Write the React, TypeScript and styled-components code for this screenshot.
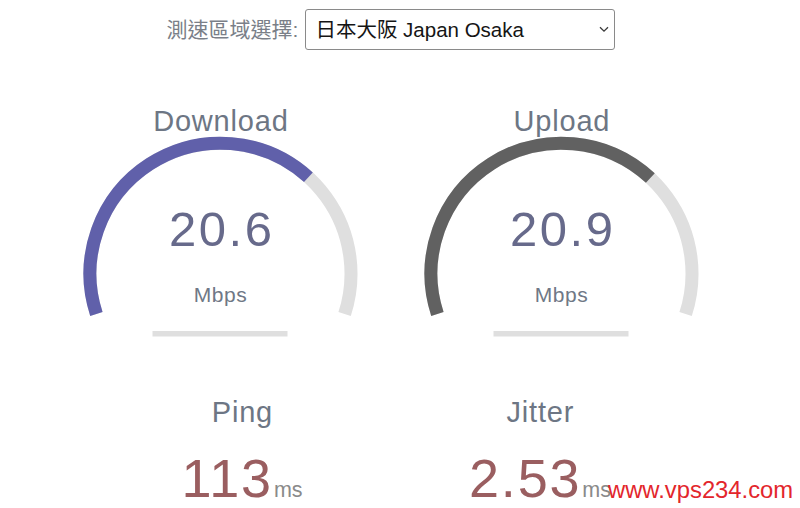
import React from "react";
import styled, { createGlobalStyle } from "styled-components";

const GlobalStyle = createGlobalStyle`
  html, body { margin: 0; padding: 0; background: #ffffff; overflow: hidden; }
  body { font-family: "Liberation Sans", "Noto Sans CJK TC", Arial, sans-serif; }
`;

const Page = styled.div`
  position: relative;
  width: 782px;
  height: 508px;
  display: flex;
  flex-direction: column;
  align-items: center;
`;

const Header = styled.div`
  display: flex;
  align-items: center;
  gap: 7px;
  margin-top: 9px;
`;

const HeaderLabel = styled.label`
  font-family: "Liberation Sans", "Noto Sans CJK TC", sans-serif;
  font-size: 21px;
  line-height: 1;
  color: #7a7f88;
`;

const SelectWrap = styled.div`
  position: relative;
  display: flex;
`;

const ServerSelect = styled.select`
  appearance: none;
  -webkit-appearance: none;
  width: 310px;
  height: 41px;
  padding: 0 28px 0 9px;
  border: 1px solid #8a8a8a;
  border-radius: 3px;
  background: #ffffff;
  color: #151515;
  font-family: "Liberation Sans", "Noto Sans CJK TC", sans-serif;
  font-size: 20.5px;
`;

const Chevron = styled.svg`
  position: absolute;
  right: 6px;
  top: 17px;
  pointer-events: none;
`;

const Row = styled.div<{ $gap: number }>`
  display: flex;
  margin-top: ${(p) => p.$gap}px;
`;

const Column = styled.div<{ $width: number }>`
  width: ${(p) => p.$width}px;
  display: flex;
  flex-direction: column;
  align-items: center;
`;

const TestName = styled.div`
  font-size: 29px;
  line-height: 26px;
  letter-spacing: 0.8px;
  padding-left: 0.8px;
  color: #6d7684;
`;

const GaugeFace = styled.div`
  display: grid;
  width: 341px;
  & > * {
    grid-area: 1 / 1;
  }
`;

const GaugeSvg = styled.svg`
  display: block;
`;

const Readout = styled.div`
  display: flex;
  flex-direction: column;
  align-items: center;
  padding-top: 71px;
`;

const GaugeValue = styled.div`
  font-size: 49px;
  line-height: 49px;
  letter-spacing: 2.5px;
  padding-left: 2.5px;
  color: #676a8b;
`;

const GaugeUnit = styled.div`
  margin-top: 31px;
  font-size: 21px;
  line-height: 20px;
  letter-spacing: 0.5px;
  color: #6f7886;
`;

const SmallReadout = styled.div`
  margin-top: 26px;
  display: flex;
  align-items: baseline;
`;

const SmallValue = styled.span`
  font-size: 54px;
  line-height: 54px;
  letter-spacing: 1.8px;
  color: #9a5e60;
`;

const SmallUnit = styled.span`
  margin-left: 1px;
  font-size: 21.5px;
  line-height: 21px;
  color: #8a8a8a;
`;

const Watermark = styled.div`
  position: absolute;
  left: 608px;
  top: 478px;
  font-size: 23.8px;
  line-height: 1;
  color: #e3262c;
`;

const W = 341;
const H = 206;
const CX = 170.5;
const CY = 139.7;
const R = 130.5;
const START = 162;
const SWEEP = 216;

const pt = (deg: number) => {
  const a = (deg * Math.PI) / 180;
  return [CX + R * Math.cos(a), CY + R * Math.sin(a)];
};

const arcPath = (from: number, to: number) => {
  const [x1, y1] = pt(from);
  const [x2, y2] = pt(to);
  const large = to - from > 180 ? 1 : 0;
  return `M ${x1.toFixed(2)} ${y1.toFixed(2)} A ${R} ${R} 0 ${large} 1 ${x2.toFixed(2)} ${y2.toFixed(2)}`;
};

const mbpsToAmount = (s: number) => 1 - 1 / Math.pow(1.3, Math.sqrt(s));

type GaugeProps = { name: string; value: string; color: string };

const Gauge = ({ name, value, color }: GaugeProps) => {
  const amount = mbpsToAmount(parseFloat(value));
  return (
    <Column $width={W}>
      <TestName>{name}</TestName>
      <GaugeFace>
        <GaugeSvg width={W} height={H} viewBox={`0 0 ${W} ${H}`}>
          <path d={arcPath(START, START + SWEEP)} fill="none" stroke="#dfdfdf" strokeWidth={13} />
          <path d={arcPath(START, START + SWEEP * amount)} fill="none" stroke={color} strokeWidth={13} />
          <rect x={CX - 68} y={197} width={135} height={5.5} fill="#dfdfdf" />
        </GaugeSvg>
        <Readout>
          <GaugeValue>{value}</GaugeValue>
          <GaugeUnit>Mbps</GaugeUnit>
        </Readout>
      </GaugeFace>
    </Column>
  );
};

const Stat = ({ name, value }: { name: string; value: string }) => (
  <Column $width={298}>
    <TestName>{name}</TestName>
    <SmallReadout>
      <SmallValue>{value}</SmallValue>
      <SmallUnit>ms</SmallUnit>
    </SmallReadout>
  </Column>
);

export default function App() {
  return (
    <Page>
      <GlobalStyle />
      <Header>
        <HeaderLabel htmlFor="server">測速區域選擇:</HeaderLabel>
        <SelectWrap>
          <ServerSelect id="server" defaultValue="osaka">
            <option value="osaka">日本大阪 Japan Osaka</option>
          </ServerSelect>
          <Chevron width="10" height="7" viewBox="0 0 10 7">
            <path d="M1 1.2 L5 5.2 L9 1.2" fill="none" stroke="#3a3a3a" strokeWidth="1.3" />
          </Chevron>
        </SelectWrap>
      </Header>
      <Row $gap={58}>
        <Gauge name="Download" value="20.6" color="#6060aa" />
        <Gauge name="Upload" value="20.9" color="#616161" />
      </Row>
      <Row $gap={59}>
        <Stat name="Ping" value="113" />
        <Stat name="Jitter" value="2.53" />
      </Row>
      <Watermark>www.vps234.com</Watermark>
    </Page>
  );
}
